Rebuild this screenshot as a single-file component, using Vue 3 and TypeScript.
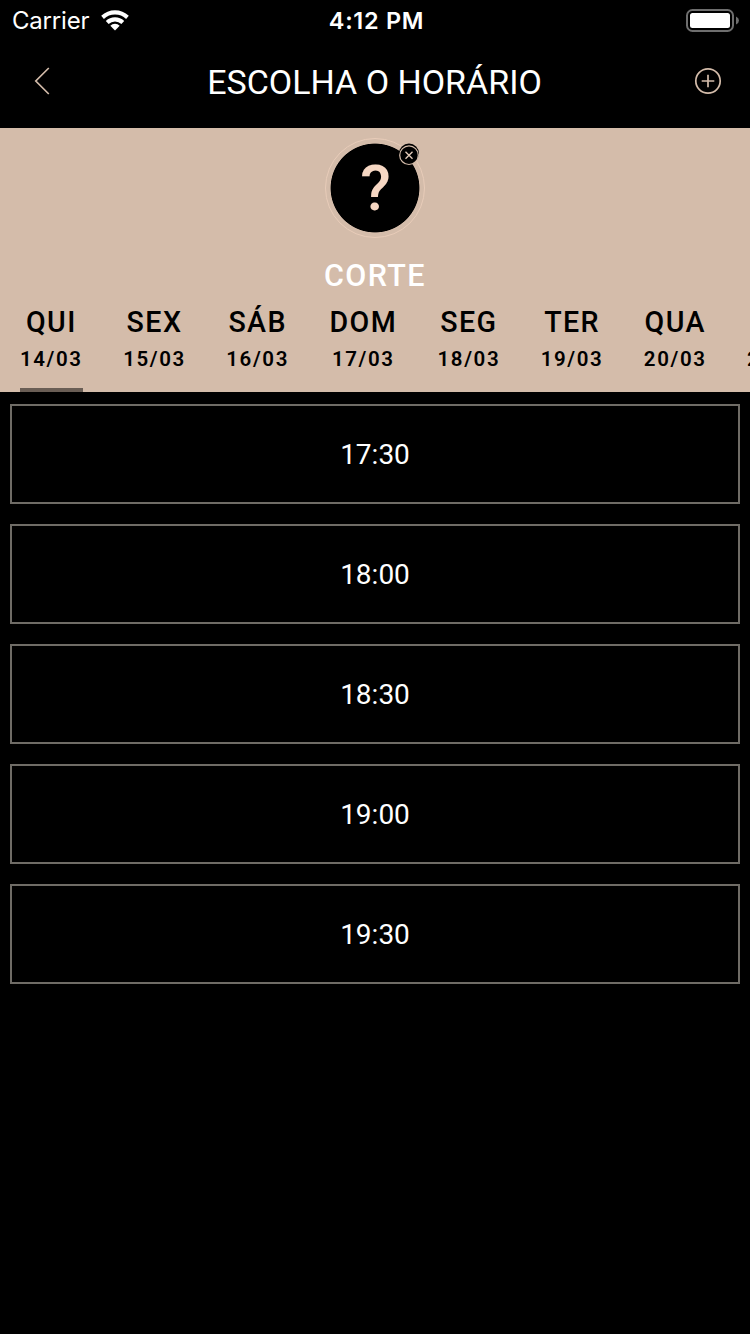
<script setup lang="ts">
interface Day {
  name: string
  date: string
}

const days: Day[] = [
  { name: 'QUI', date: '14/03' },
  { name: 'SEX', date: '15/03' },
  { name: 'SÁB', date: '16/03' },
  { name: 'DOM', date: '17/03' },
  { name: 'SEG', date: '18/03' },
  { name: 'TER', date: '19/03' },
  { name: 'QUA', date: '20/03' },
  { name: 'QUI', date: '21/03' },
]
const activeDate = '14/03'
const slots: string[] = ['17:30', '18:00', '18:30', '19:00', '19:30']
</script>

<template>
  <main class="screen">
    <div class="status">
      <div class="carrier">
        <span>Carrier</span>
        <svg class="wifi" width="28" height="21" viewBox="0 0 28 21">
          <path d="M0.2 5.8 A19.8 19.8 0 0 1 27.8 5.8 L25.1 8.9 A16 16 0 0 0 2.9 8.9 Z" />
          <path d="M4.8 10.9 A13.2 13.2 0 0 1 23.2 10.9 L20.4 14 A9.3 9.3 0 0 0 7.6 14 Z" />
          <path d="M9.3 15.7 A6.8 6.8 0 0 1 18.7 15.7 L14 20.4 Z" />
        </svg>
      </div>
      <span class="clock">4:12 PM</span>
      <svg class="battery" width="54" height="24" viewBox="0 0 54 24">
        <rect x="1" y="2" width="46" height="21" rx="5.5" fill="none" stroke="#6e6e6e" stroke-width="2" />
        <rect x="4" y="5" width="40" height="15" rx="2.5" fill="#fff" />
        <path d="M50 8.5 Q53 9.8 53 12.5 Q53 15.2 50 16.5 Z" fill="#6e6e6e" />
      </svg>
    </div>

    <header class="bar">
      <button class="icon" aria-label="Voltar">
        <svg width="16" height="28" viewBox="0 0 16 28">
          <path d="M14.8 1 L1.8 14 L14.8 27" />
        </svg>
      </button>
      <h1>ESCOLHA O HORÁRIO</h1>
      <button class="icon" aria-label="Adicionar">
        <svg width="28" height="28" viewBox="0 0 28 28">
          <circle cx="14" cy="14" r="12.2" />
          <path d="M14 7.7 V20.3 M7.7 14 H20.3" />
        </svg>
      </button>
    </header>

    <section class="panel">
      <div class="avatar">
        <span class="mark">?</span>
        <svg class="remove" width="22" height="24" viewBox="0 0 22 24">
          <circle cx="11" cy="10.6" r="10" fill="#000" />
          <circle cx="11" cy="12.2" r="9.3" fill="#000" stroke="#d4bcaa" stroke-width="1.2" />
          <path d="M7.5 8.8 L14.5 15.8 M14.5 8.8 L7.5 15.8" stroke="#e6cdbb" stroke-width="1.3" />
        </svg>
      </div>
      <h2>CORTE</h2>
      <nav class="days">
        <div v-for="d in days" :key="d.date" class="day" :class="{ active: d.date === activeDate }">
          <span class="name">{{ d.name }}</span>
          <span class="date">{{ d.date }}</span>
        </div>
      </nav>
    </section>

    <div class="slots">
      <button v-for="s in slots" :key="s" class="slot">{{ s }}</button>
    </div>
  </main>
</template>

<style>
body {
  margin: 0;
  background: #000;
}
</style>

<style scoped>
.screen {
  width: 750px;
  height: 1334px;
  overflow: hidden;
  background: #000;
  color: #fff;
  font-family: Roboto, "Liberation Sans", sans-serif;
}
button {
  padding: 0;
  background: none;
  color: inherit;
  font: inherit;
}
.status {
  display: grid;
  grid-template-columns: 1fr auto 1fr;
  align-items: center;
  height: 40px;
  padding: 0 10px 0 12px;
  box-sizing: border-box;
  font-family: Inter, "Liberation Sans", sans-serif;
  font-size: 24px;
}
.carrier {
  display: flex;
  align-items: center;
  gap: 12px;
  letter-spacing: -0.2px;
}
.carrier span {
  padding-top: 1px;
}
.wifi {
  fill: #fff;
}
.clock {
  padding: 0 0 0 1px;
  font-weight: 600;
  font-size: 23.5px;
  letter-spacing: 0.7px;
}
.battery {
  justify-self: end;
}
.bar {
  display: flex;
  align-items: center;
  justify-content: space-between;
  height: 88px;
  padding: 0 28px;
  box-sizing: border-box;
}
h1 {
  margin: 0 1px 4px 0;
  font-size: 34px;
  font-weight: 400;
  line-height: 40px;
}
.icon {
  display: flex;
  align-items: center;
  justify-content: center;
  width: 28px;
  height: 28px;
  margin-bottom: 6px;
  border: 0;
}
.icon svg {
  flex: none;
  fill: none;
  stroke: #d4bcaa;
  stroke-width: 1.7;
}
.panel {
  display: flex;
  flex-direction: column;
  align-items: center;
  height: 264px;
  padding-top: 10px;
  box-sizing: border-box;
  background: #d4bcaa;
}
.avatar {
  position: relative;
  display: flex;
  align-items: center;
  justify-content: center;
  width: 100px;
  height: 100px;
  box-sizing: border-box;
  border: 1px solid #e8ccb9;
  border-radius: 50%;
  background: radial-gradient(circle, #000 44px, transparent 44.8px);
}
.mark {
  padding: 1px 0 0 1px;
  color: #f6d7c3;
  font-size: 63px;
  font-weight: 500;
  line-height: 95px;
}
.remove {
  position: absolute;
  top: 4px;
  right: 4px;
}
h2 {
  margin: 20px 0 0;
  font-size: 30.5px;
  font-weight: 500;
  line-height: 36px;
  letter-spacing: 1.4px;
}
.days {
  display: flex;
  align-self: stretch;
  gap: 40.5px;
  height: 98px;
  padding-left: 20px;
  overflow: hidden;
  color: #000;
  font-weight: 500;
}
.day {
  display: flex;
  flex: none;
  flex-direction: column;
  align-items: center;
  box-sizing: border-box;
  border-bottom: 4px solid transparent;
}
.day.active {
  border-color: #6a5e55;
}
.name {
  margin-top: 10px;
  font-size: 28.6px;
  line-height: 36px;
  letter-spacing: 1.4px;
}
.date {
  margin-top: 6px;
  font-size: 20.5px;
  font-weight: 600;
  line-height: 26px;
  letter-spacing: 1.6px;
}
.slots {
  display: flex;
  flex-direction: column;
  gap: 20px;
  padding: 12px 10px;
}
.slot {
  height: 100px;
  box-sizing: border-box;
  border: 2px solid #6f6c66;
  font-size: 28px;
}
</style>
